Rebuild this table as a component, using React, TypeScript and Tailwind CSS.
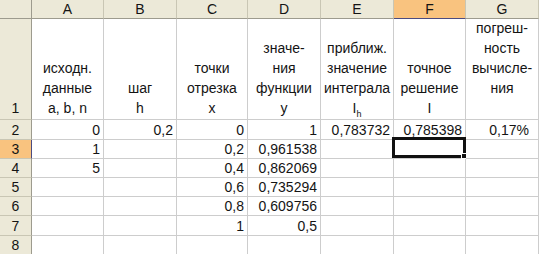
const cols = ["A", "B", "C", "D", "E", "F", "G"];

const data: string[][] = [
  ["0", "0,2", "0", "1", "0,783732", "0,785398", "0,17%"],
  ["1", "", "0,2", "0,961538", "", "", ""],
  ["5", "", "0,4", "0,862069", "", "", ""],
  ["", "", "0,6", "0,735294", "", "", ""],
  ["", "", "0,8", "0,609756", "", "", ""],
  ["", "", "1", "0,5", "", "", ""],
  ["", "", "", "", "", "", ""],
];

const titles: React.ReactNode[] = [
  <>исходн.<br />данные<br />a, b, n</>,
  <>шаг<br />h</>,
  <>точки<br />отрезка<br />x</>,
  <>значе-<br />ния<br />функции<br />y</>,
  <>приближ.<br />значение<br />интеграла<br />I<sub className="text-[9px] align-[-2px]">h</sub></>,
  <>точное<br />решение<br />I</>,
  <>погреш-<br />ность<br />вычисле-<br />ния</>,
];

const App = () => {
  return (
    <div
      className="h-[254px] w-[539px] overflow-hidden bg-white text-[14px] text-[#141414]"
      style={{ fontFamily: '"Liberation Sans", Arial, sans-serif' }}
    >
      <div className="grid grid-cols-[32px_72px_73px_71px_73px_73px_72px_73px] grid-rows-[19px_101px_20px_19px_19px_19px_19px_20px_19px]">
        {/* header row */}
        <div className="border-r border-b border-r-[#9d9b8e] border-b-[#9d9b8e] bg-[#ece9d8]"></div>
        {cols.map((c) => (
          <div
            key={c}
            className={`flex items-center justify-center border-r border-b leading-none ${
              c === "F"
                ? "border-r-[#c9c6b4] border-b-[#4b4b80] bg-[#f9c37f]"
                : "border-r-[#c9c6b4] border-b-[#9d9b8e] bg-[#ece9d8]"
            }`}
          >
            {c}
          </div>
        ))}

        {/* row 1 */}
        <div className="flex items-end justify-center border-r border-b border-r-[#9d9b8e] border-b-[#c9c6b4] bg-[#ece9d8] pb-[2px] leading-[18px]">
          1
        </div>
        {titles.map((t, i) => (
          <div
            key={i}
            className={`flex flex-col items-center justify-end border-r border-b border-[#cdcdcd] text-center leading-[20px] ${
              i === 6 ? "pb-[21px]" : "pb-[1px]"
            }`}
          >
            <div>{t}</div>
          </div>
        ))}

        {/* data rows */}
        {data.map((row, r) => (
          <RowCells key={r} n={r + 2} row={row} />
        ))}
      </div>
    </div>
  );
};

const RowCells = ({ n, row }: { n: number; row: string[] }) => {
  const selected = n === 3;
  return (
    <>
      <div
        className={`flex items-center justify-center border-r border-b leading-none ${
          selected
            ? "border-r-[#4b4b80] border-b-[#c9c6b4] bg-[#f9c37f]"
            : "border-r-[#9d9b8e] border-b-[#c9c6b4] bg-[#ece9d8]"
        }`}
      >
        {n}
      </div>
      {row.map((v, i) => (
        <div
          key={i}
          className={`relative flex items-center justify-end border-r border-b border-[#cdcdcd] leading-none ${
            i === 6 ? "pr-[9px]" : "pr-[3px]"
          }`}
        >
          {v}
          {selected && i === 5 && (
            <div className="absolute -top-[3px] -right-[1px] bottom-0 -left-[2px] border-[3px] border-[#111]">
              <div className="absolute -right-[4px] -bottom-[4px] h-[6px] w-[6px] border border-white bg-[#111]"></div>
            </div>
          )}
        </div>
      ))}
    </>
  );
};

export default App;
